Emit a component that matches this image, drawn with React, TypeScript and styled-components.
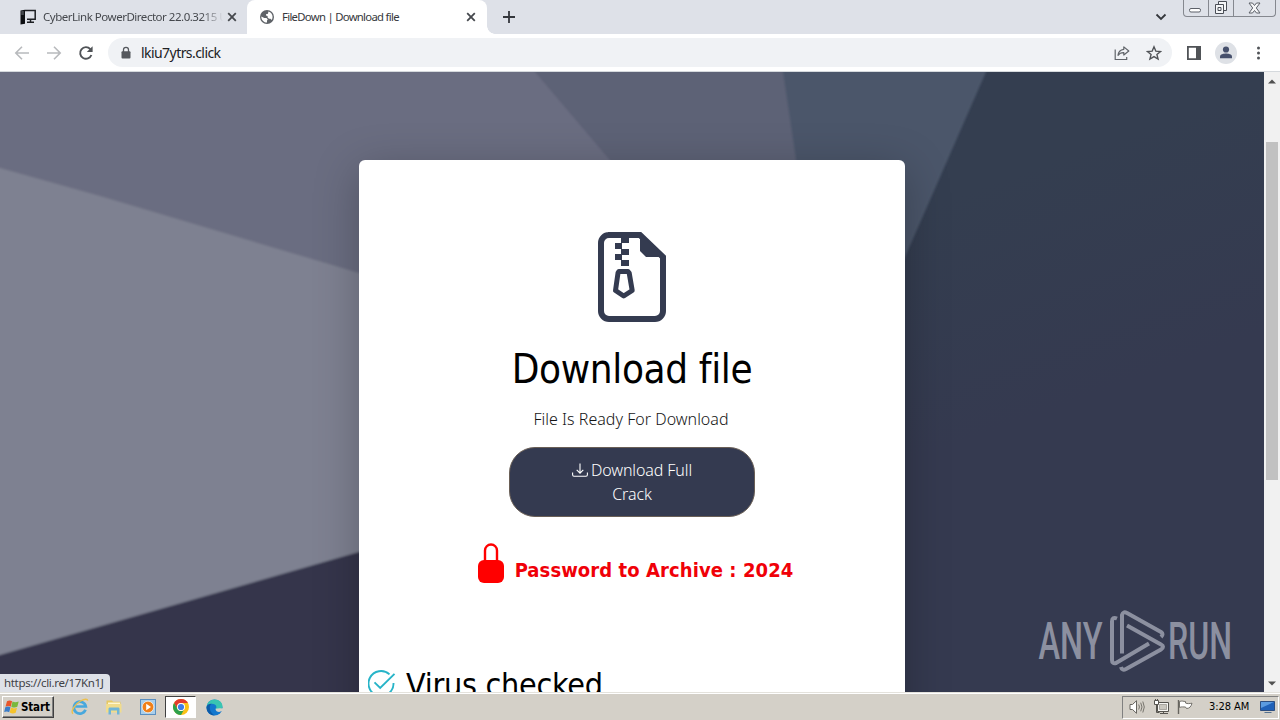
import React from "react";
import styled, { createGlobalStyle } from "styled-components";

const ui = `"Noto Sans", "Open Sans", sans-serif`;
const tahoma = `"DejaVu Sans Condensed", "DejaVu Sans", sans-serif`;

const GlobalStyle = createGlobalStyle`
  * { box-sizing: border-box; }
  body { margin: 0; overflow: hidden; background: #fff; }
  svg { display: block; flex: none; }
`;

const Desktop = styled.div`
  width: 1280px;
  height: 720px;
  display: flex;
  flex-direction: column;
  font-family: ${ui};
  overflow: hidden;
`;

const TabStrip = styled.div`
  height: 34px;
  flex: none;
  display: flex;
  background: #dee1e8;
`;

const Tab = styled.div<{ $active?: boolean; $width: number; $pad: number }>`
  width: ${(p) => p.$width}px;
  height: 34px;
  display: flex;
  align-items: center;
  padding: 0 ${(p) => (p.$active ? 11 : 10)}px 0 ${(p) => p.$pad}px;
  background: ${(p) => (p.$active ? "#fff" : "transparent")};
  border-radius: 8px 8px 0 0;
`;

const TabTitle = styled.span<{ $fade?: boolean; $size: number; $spacing: number }>`
  flex: 1;
  min-width: 0;
  margin-left: ${(p) => (p.$fade ? 7 : 8)}px;
  overflow: hidden;
  white-space: nowrap;
  font-size: ${(p) => p.$size}px;
  line-height: 16px;
  letter-spacing: ${(p) => p.$spacing}px;
  color: ${(p) => (p.$fade ? "#45484d" : "#36383c")};
  ${(p) => p.$fade && "mask-image: linear-gradient(to right, #000 86%, transparent 98%);"}
`;

const TabCorner = styled.div`
  width: 8px;
  height: 8px;
  align-self: flex-end;
  background: radial-gradient(circle at 100% 0, #dee1e8 7.5px, #fff 8px);
`;

const NewTab = styled.div`
  margin: 10px 0 0 7px;
`;

const WindowControls = styled.div`
  margin-left: auto;
  display: flex;
  gap: 16px;
`;

const TabSearch = styled.div`
  padding-top: 13px;
`;

const ControlGroup = styled.div`
  display: flex;
  width: 93px;
  height: 17px;
  margin-right: 4px;
  border: 1px solid #85888f;
  border-top: 0;
  border-radius: 0 0 4px 4px;
`;

const Control = styled.div<{ $width: number }>`
  width: ${(p) => p.$width}px;
  display: flex;
  justify-content: center;
  align-items: center;
  & + & { border-left: 1px solid #85888f; }
`;

const Toolbar = styled.div`
  height: 38px;
  flex: none;
  display: flex;
  align-items: center;
  background: #fff;
  border-bottom: 1px solid #d5d9dd;
  padding: 0 12px 0 14px;
`;

const NavButtons = styled.div`
  display: flex;
  gap: 16px;
  margin-right: 14px;
`;

const AddressBar = styled.div`
  width: 1064px;
  height: 29px;
  display: flex;
  align-items: center;
  border-radius: 15px;
  background: #f0f2f5;
  padding: 0 10px 0 12px;
`;

const Address = styled.span`
  flex: 1;
  margin-left: 9px;
  font-size: 14px;
  line-height: 20px;
  letter-spacing: -0.56px;
  color: #202124;
`;

const AddressActions = styled.div`
  display: flex;
  gap: 16px;
`;

const ProfileActions = styled.div`
  display: flex;
  align-items: center;
  margin-left: 15px;
  gap: 14px;
`;

const Viewport = styled.div`
  position: relative;
  height: 620px;
  flex: none;
  display: flex;
`;

const Page = styled.main`
  position: relative;
  width: 1264px;
  overflow: hidden;
  display: flex;
  justify-content: center;
  padding-top: 88px;
  background: #353a50;
`;

const Backdrop = styled.svg`
  position: absolute;
  inset: 0;
`;

const Card = styled.section`
  position: relative;
  width: 546px;
  height: 700px;
  flex: none;
  display: flex;
  flex-direction: column;
  align-items: center;
  padding-top: 72px;
  background: #fff;
  border-radius: 6px;
  box-shadow: 0 10px 45px rgba(0, 0, 0, 0.25);
`;

const Title = styled.h1`
  margin: 23px 0 0;
  font: 400 40px/48px ${tahoma};
  letter-spacing: -0.35px;
  color: #000;
  white-space: nowrap;
`;

const Subtitle = styled.p`
  margin: 14px 2px 0 0;
  font-size: 16px;
  line-height: 24px;
  font-weight: 300;
  letter-spacing: 0.02px;
  color: #151515;
`;

const DownloadButton = styled.button`
  width: 246px;
  height: 70px;
  margin: 16px 0 0;
  padding: 0 50px;
  border: 1px solid #6a5f56;
  border-radius: 26px;
  background: #343a50;
  color: #fff;
  font: 300 16px/24px ${ui};
  letter-spacing: -0.1px;
`;

const ButtonLine = styled.span`
  display: flex;
  justify-content: center;
  align-items: center;
  gap: 3px;
  white-space: nowrap;
`;

const PasswordRow = styled.div`
  display: flex;
  align-items: flex-start;
  gap: 11px;
  margin: 26px 0 0 7px;
`;

const Password = styled.strong`
  margin-top: 15px;
  font: 700 20px/24px ${tahoma};
  letter-spacing: 0.08px;
  color: #f00008;
  white-space: nowrap;
`;

const CheckRow = styled.div`
  align-self: flex-start;
  display: flex;
  align-items: flex-start;
  gap: 10px;
  margin: 87px 0 0 9px;
`;

const CheckTitle = styled.h2`
  margin: -3px 0 0;
  font: 400 32px/36px ${tahoma};
  letter-spacing: -0.28px;
  color: #000;
  white-space: nowrap;
`;

const Watermark = styled.svg`
  position: absolute;
  left: 1030px;
  top: 528px;
`;

const StatusBubble = styled.div`
  position: absolute;
  left: 0;
  bottom: 0;
  width: 110px;
  height: 18px;
  padding-left: 4px;
  border-radius: 0 4px 0 0;
  background: #dee1e8;
  color: #3f4146;
  font-size: 11.5px;
  line-height: 18px;
  letter-spacing: -0.33px;
  white-space: nowrap;
`;

const Scrollbar = styled.div`
  width: 16px;
  display: flex;
  flex-direction: column;
  align-items: center;
  background: #f1f1f1;
  padding: 7px 0 6px;
`;

const Thumb = styled.div`
  width: 12px;
  height: 338px;
  margin: 58px 0 auto;
  background: #c1c1c1;
`;

const Taskbar = styled.footer`
  height: 28px;
  flex: none;
  display: flex;
  align-items: center;
  background: #d4d0c8;
  border-top: 1px solid #e4e2dc;
  box-shadow: inset 0 1px 0 #fff;
  padding: 1px 1px 0 2px;
`;

const StartButton = styled.div`
  width: 52px;
  height: 22px;
  display: flex;
  align-items: center;
  gap: 1px;
  padding-left: 1px;
  border: 1px solid;
  border-color: #fff #404040 #404040 #fff;
  box-shadow: inset -1px -1px 0 #808080;
  font: 700 11.5px/18px ${tahoma};
  letter-spacing: -0.15px;
  color: #000;
`;

const QuickLaunch = styled.div`
  display: flex;
  align-items: center;
  margin-left: 9px;
`;

const LaunchItem = styled.div<{ $pressed?: boolean; $width: number }>`
  width: ${(p) => p.$width}px;
  height: 22px;
  display: flex;
  justify-content: center;
  align-items: center;
  background: ${(p) => (p.$pressed ? "#fff" : "transparent")};
  border: ${(p) => (p.$pressed ? "1px solid" : "0")};
  border-color: #404040 #fff #fff #404040;
`;

const Tray = styled.div`
  width: 157px;
  height: 23px;
  margin-left: auto;
  display: flex;
  align-items: center;
  padding-left: 6px;
  border: 1px solid;
  border-color: #808080 #fff #fff #808080;
`;

const TrayIcons = styled.div`
  display: flex;
  gap: 7px;
`;

const Clock = styled.span`
  width: 42px;
  margin: 0 9px 0 15px;
  font: 400 11px/16px ${tahoma};
  letter-spacing: -0.05px;
  color: #000;
  white-space: nowrap;
`;

const CloseIcon = () => (
  <svg width="10" height="10" viewBox="0 0 10 10">
    <path d="M1.2 1.2 8.8 8.8M8.8 1.2 1.2 8.8" stroke="#45484d" strokeWidth="1.8" />
  </svg>
);

const ComputerIcon = () => (
  <svg width="16" height="16" viewBox="0 0 16 16">
    <path d="M0.5 1.5 5 .8V14.8L.5 15.5Z" fill="#0d0f12" />
    <path d="M1.3 3h2.5M1.3 5h2.5" stroke="#9ba0a8" strokeWidth=".8" />
    <path d="M5 1.5h10.2v8.7H7" fill="none" stroke="#1d1f23" strokeWidth="1.5" />
    <path d="M10.5 10.5v2M7 13.2h7" stroke="#1d1f23" strokeWidth="1.5" />
  </svg>
);

const GlobeIcon = () => (
  <svg width="14" height="14" viewBox="0 0 14 14">
    <circle cx="7" cy="7" r="7" fill="#5f6368" />
    <path d="M1.3 6.5 4.3 8h2.2l1.3 1.4-.8 1.2v2C3.8 12.6 1.2 10 1.3 6.5Z" fill="#fff" />
    <path d="M8.4 1.5c2.5.7 4.3 2.9 4.2 5.6-.1 1.2-.4 2.2-1 3L10.5 8.7H9L7.6 7.5V6L6 5.5V4.3l2-.5Z" fill="#fff" />
  </svg>
);

const ArrowIcon = ({ forward }: { forward?: boolean }) => (
  <svg width="16" height="16" viewBox="0 0 16 16">
    <path
      d={forward ? "M1 8h13M8 1.8 14.2 8 8 14.2" : "M15 8H2M8 1.8 1.8 8 8 14.2"}
      fill="none" stroke="#b8babd" strokeWidth="1.6"
    />
  </svg>
);

const ReloadIcon = () => (
  <svg width="16" height="16" viewBox="0 0 16 16">
    <path d="M13.4 10A5.8 5.8 0 1 1 12.3 4.1L13.5 5.3" fill="none" stroke="#505357" strokeWidth="1.9" />
    <path d="M14.6 1.2V7H8.8Z" fill="#505357" />
  </svg>
);

const SmallLock = () => (
  <svg width="12" height="14" viewBox="0 0 12 14">
    <rect x="1.5" y="5.2" width="9" height="7.3" rx="1" fill="#55585d" />
    <path d="M3.5 6V3.8a2.5 2.5 0 0 1 5 0V6" fill="none" stroke="#55585d" strokeWidth="1.3" />
  </svg>
);

const ShareIcon = () => (
  <svg width="16" height="16" viewBox="0 0 16 16">
    <path d="M1.2 4.5v10h11.5v-2.5" fill="none" stroke="#606469" strokeWidth="1.2" />
    <path d="M9.8 1.9 14.8 6 9.8 10V7.6C7.2 7.5 5.4 8.3 4 10.3 4.3 6.9 6.2 4.7 9.8 4.3Z" fill="none" stroke="#606469" strokeWidth="1.2" strokeLinejoin="round" />
  </svg>
);

const StarIcon = () => (
  <svg width="16" height="16" viewBox="0 0 16 16">
    <path d="m8 1.8 1.8 4.3 4.7.4-3.6 3 1.2 4.6L8 11.6l-4.1 2.5 1.2-4.6-3.6-3 4.7-.4Z" fill="none" stroke="#505357" strokeWidth="1.35" />
  </svg>
);

const SidePanelIcon = () => (
  <svg width="14" height="14" viewBox="0 0 14 14">
    <path d="M0 0h14v14H0ZM1.8 1.8v10.4H9V1.8Z" fill="#505357" fillRule="evenodd" />
  </svg>
);

const ProfileIcon = () => (
  <svg width="22" height="22" viewBox="0 0 22 22">
    <circle cx="11" cy="11" r="11" fill="#dee1e6" />
    <circle cx="11" cy="7.5" r="3.1" fill="#46506c" />
    <path d="M5 16.3V14.5c0-2.2 3.8-3 6-3s6 .8 6 3v1.8Z" fill="#46506c" />
  </svg>
);

const MenuIcon = () => (
  <svg width="16" height="16" viewBox="0 0 16 16">
    {[3, 8, 13].map((y) => <circle key={y} cx="7.5" cy={y} r="1.5" fill="#505357" />)}
  </svg>
);

const ScrollArrow = ({ down }: { down?: boolean }) => (
  <svg width="8" height="5" viewBox="0 0 8 5">
    <path d={down ? "M0 .5h8L4 4.5Z" : "M0 4.5h8L4 .5Z"} fill="#505050" />
  </svg>
);

const ZipIcon = () => (
  <svg width="68" height="90" viewBox="0 0 68 90">
    <path d="M10 3H42L65 25V79a8 8 0 0 1-8 8H11a8 8 0 0 1-8-8V11A8 8 0 0 1 11 3" fill="none" stroke="#343b50" strokeWidth="6" />
    <path d="M42 2 67 25H48L42 19Z" fill="#343b50" />
    <path d="M23 5h8v6h-8ZM17 11h7v6h-7ZM23 17h8v6h-8ZM17 22h7v6h-7ZM23 28h8v6h-8Z" fill="#343b50" />
    <path d="M21 39.5h9l1.2 1.5 3 17.5L25.7 64 17.5 58.5 20 41Z" fill="none" stroke="#343b50" strokeWidth="5" strokeLinejoin="round" />
  </svg>
);

const DownloadIcon = () => (
  <svg width="16" height="16" viewBox="0 0 16 16">
    <path d="M.6 10.5v2.3c0 .9.5 1.4 1.4 1.4h12c.9 0 1.4-.5 1.4-1.4v-2.3M8 1.5v9.5M4.7 7.9 8 11.2l3.3-3.3" fill="none" stroke="#fff" strokeWidth="1.1" />
  </svg>
);

const RedLock = () => (
  <svg width="26" height="40" viewBox="0 0 26 40">
    <path d="M7 19V7.5a6 6 0 0 1 12 0V19" fill="none" stroke="#f00" strokeWidth="2.4" />
    <rect y="17" width="26" height="23" rx="6" fill="#f00" />
  </svg>
);

const CheckIcon = () => (
  <svg width="28" height="29" viewBox="0 0 28 29">
    <path d="M21.5 4.4A12.5 12.5 0 1 0 25.5 13M6.500 12.300l5.700 5.700L26.500 3.800" fill="none" stroke="#27b4c8" strokeWidth="1.900" />
  </svg>
);

const StartFlag = () => (
  <svg width="16" height="16" viewBox="0 0 15 16">
    <path d="M2.5 2.3C4.5 1 6 1.3 7.6 2.3L6.2 7.7C4.6 6.7 3 6.7 1 7.7Z" fill="#e8562a" />
    <path d="M8 2.5c2 1.1 3.7 1 6.2 0l-1.4 5.3c-2 1-3.8 1-6-.1Z" fill="#79b83c" />
    <path d="M.8 8.2c2-1 3.5-1 5.2.1l-1.3 4.9c-1.7-1-3.3-1-5-.1Z" fill="#3a7cc8" />
    <path d="M6.5 8.6c2 1.1 3.7 1 6 .1l-1.3 5c-2 1-3.7 1-6-.1Z" fill="#f5c32c" />
  </svg>
);

const ExplorerIcon = () => (
  <svg width="18" height="18" viewBox="0 0 18 18">
    <path d="M14.5 11.8a6 6 0 1 1 .3-3.3H4.5" fill="none" stroke="#48a8dd" strokeWidth="2.7" />
    <path d="M2 15.8C-.8 13.4 4 6 9.5 3c4-2.2 7-2.5 7.2-.2" fill="none" stroke="#edc04d" strokeWidth="1.4" />
  </svg>
);

const FolderIcon = () => (
  <svg width="18" height="18" viewBox="0 0 18 18">
    <path d="M1.5 4V2.5H7l1 1.3h7.5V8h-14Z" fill="#e6c862" />
    <path d="M3 4.5h12V8H3Z" fill="#fff7d0" />
    <path d="M1 6h15.5v8.5H1Z" fill="#f1dc8c" />
    <path d="M3.500 16.500V11c0-1 .6-1.500 1.500-1.500h8c1 0 1.500.5 1.500 1.500v5.500h-2.500v-4H6v4Z" fill="#70b5d8" />
  </svg>
);

const MediaIcon = () => (
  <svg width="16" height="16" viewBox="0 0 16 16">
    <rect x=".5" y=".5" width="15" height="15" fill="#a9cfeb" stroke="#5a8fc0" />
    <circle cx="8" cy="8" r="5.8" fill="#f08019" stroke="#fff" strokeWidth=".6" />
    <path d="M6.2 4.7 11 8l-4.8 3.3Z" fill="#fff" />
  </svg>
);

const ChromeIcon = () => (
  <svg width="16" height="16" viewBox="0 0 16 16">
    <circle cx="8" cy="8" r="8" fill="#fbc116" />
    <path d="M1.07 4A8 8 0 0 1 14.93 4H8A4 4 0 0 0 4.54 10Z" fill="#e33b2e" />
    <path d="M1.07 4A8 8 0 0 0 8 16L11.46 10A4 4 0 0 1 4.54 10Z" fill="#2da14c" />
    <circle cx="8" cy="8" r="4" fill="#fff" />
    <circle cx="8" cy="8" r="3.1" fill="#3e7de8" />
  </svg>
);

const EdgeIcon = () => (
  <svg width="17" height="17" viewBox="0 0 17 17">
    <circle cx="8.5" cy="8.5" r="8" fill="#1378ce" />
    <path d="M.6 8C1 3.5 4.3.5 8.6.5c4.5 0 8 3 7.9 6.8 0 2.4-1.8 4-4.3 4-1.6 0-2.5-.6-2.5-1.3 0-.6.7-.9.7-2C10.4 6 8 4.8 5.700 4.800 3 4.800 1.200 6.200.6 8Z" fill="#39c5b2" />
    <path d="M.5 8c.7-2.200 2.600-3.300 5-3.200C4 6 3.400 8 4 10.500c.5 2.300 2.300 4.500 4.600 5.900C4 16.500.3 13 .5 8Z" fill="#0c5ba8" />
    <path d="M9.600 9.800c-.2 3 3.600 3.900 6.500 2.300l1.200-2.600-3.500-.2Z" fill="#d4d0c8" />
  </svg>
);

const SpeakerIcon = () => (
  <svg width="17" height="16" viewBox="0 0 17 16">
    <path d="M1 5.5h2.5L7.5 1.7v12.6L3.5 10.5H1Z" fill="#fff" stroke="#66645f" />
    <path d="M9.7 5.5q1.5 2.5 0 5M11.7 3.7q2.6 4.3 0 8.6M13.8 2.5q3 5.5 0 11" fill="none" stroke="#77746d" />
  </svg>
);

const NetworkIcon = () => (
  <svg width="17" height="16" viewBox="0 0 17 16">
    <path d="M4.5 3.5h11v9h-11Z" fill="#f7f6f3" stroke="#56544f" />
    <path d="M6.5 5.5h7v5h-7Z" fill="#cac7bf" stroke="#85827b" strokeWidth=".6" />
    <path d="M7 14.5h8M10.5 12.5v2" stroke="#56544f" />
    <path d="M1.5 1.5h4v4h-4Z" fill="#fff" stroke="#56544f" />
    <path d="M3.5 5.5v8h3" fill="none" stroke="#56544f" />
    <path d="M2.5 0v2M4.5 0v2" stroke="#56544f" />
  </svg>
);

const FlagIcon = () => (
  <svg width="17" height="16" viewBox="0 0 17 16">
    <path d="M1.5 1v14" stroke="#66645f" strokeWidth="1.4" />
    <path d="M2.5 2.5c2.5-1 4 0 6 0V4c2 1 4 .6 6.5.2-.8 3.3-2.5 5.3-5.5 5.3L8.5 8c-2 0-4-.5-6 .5Z" fill="#fff" stroke="#66645f" strokeWidth=".9" />
  </svg>
);

const DesktopIcon = () => (
  <svg width="16" height="14" viewBox="0 0 16 14">
    <path d="M.5 1.5h14v9H.5Z" fill="#2061b8" stroke="#2d4e80" />
    <path d="M1 2h13L1 8Z" fill="#5b9be0" />
    <path d="M4.5 12.5h7" stroke="#55718f" />
  </svg>
);

const Scenery = () => (
  <Backdrop width="1264" height="620" viewBox="0 72 1264 620">
    <defs>
      <linearGradient id="dusk" gradientUnits="userSpaceOnUse" x1="1000" y1="180" x2="1080" y2="400">
        <stop offset="0" stopColor="#343e50" />
        <stop offset="1" stopColor="#353a50" />
      </linearGradient>
      <filter id="soften" x="-5%" y="-5%" width="110%" height="110%">
        <feGaussianBlur stdDeviation="0.9" />
      </filter>
    </defs>
    <rect y="72" width="1264" height="620" fill="url(#dusk)" />
    <g filter="url(#soften)">
      <path d="M-20 720V480H500V720Z" fill="#34354c" />
      <path d="M500 50H995.5L986 72 895 280 810 240H500Z" fill="#4b566a" />
      <path d="M500 50H780.5L783 72 805 220H500Z" fill="#5d6276" />
      <path d="M-20 50H516L535 72 720 290V300H-20Z" fill="#6b6d81" />
      <path d="M-20 162.500 0 168 100 196 359 273 400 285V540L359 552 0 655-20 661Z" fill="#7e8191" />
    </g>
  </Backdrop>
);

const Logo = () => (
  <Watermark width="214" height="84" viewBox="1030 600 214 84">
    <g fill="#8c90a0" fontFamily="Roboto, sans-serif" fontSize="51" fontWeight="500">
      <text x="1038.5" y="659.3" textLength="64" lengthAdjust="spacingAndGlyphs">ANY</text>
      <text x="1168" y="659.3" textLength="64" lengthAdjust="spacingAndGlyphs">RUN</text>
    </g>
    <g fill="none" stroke="#8c90a0" strokeWidth="4" strokeLinejoin="round">
      <path d="M1117 618.5q-5-2-5 3V660q0 4 4 3L1149 643.5" />
      <path d="M1122 653.5V615q1-4 5-2L1161 632q3 2 0 5" />
      <path d="M1127 625.5 1161 644.5q4 2 0 5L1126 669q-4 2-5-2" />
    </g>
  </Watermark>
);

export default function App() {
  return (
    <Desktop>
      <GlobalStyle />
      <TabStrip>
        <Tab $width={247} $pad={20}>
          <ComputerIcon />
          <TabTitle $fade $size={11.5} $spacing={-0.48}>CyberLink PowerDirector 22.0.3215 U</TabTitle>
          <CloseIcon />
        </Tab>
        <Tab $active $width={240} $pad={13}>
          <GlobeIcon />
          <TabTitle $size={11.3} $spacing={-0.7}>FileDown | Download file</TabTitle>
          <CloseIcon />
        </Tab>
        <TabCorner />
        <NewTab>
          <svg width="14" height="14" viewBox="0 0 14 14">
            <path d="M7 1v12M1 7h12" stroke="#34373c" strokeWidth="1.8" />
          </svg>
        </NewTab>
        <WindowControls>
          <TabSearch>
            <svg width="12" height="8" viewBox="0 0 12 8">
              <path d="m1.5 1.5 4.5 4.5 4.5-4.5" fill="none" stroke="#34373c" strokeWidth="1.8" />
            </svg>
          </TabSearch>
          <ControlGroup>
            <Control $width={24}>
              <svg width="13" height="14" viewBox="0 0 13 14">
                <rect x=".5" y="7.5" width="11" height="3.5" rx="1.5" fill="#fff" stroke="#5c6068" />
              </svg>
            </Control>
            <Control $width={26}>
              <svg width="14" height="14" viewBox="0 0 14 14">
                <path d="M4.5.5h8v9h-8Z" fill="#f5f6f8" stroke="#4a4e56" />
                <path d="M1.5 3.5h8v9h-8ZM4 6.5h3v3H4Z" fill="#f5f6f8" stroke="#4a4e56" />
              </svg>
            </Control>
            <Control $width={42}>
              <svg width="13" height="12" viewBox="0 0 13 12">
                <path d="M1 1h3.5l2 2.5L8.5 1H12L8.3 6l3.7 5H8.5l-2-2.5-2 2.5H1l3.7-5Z" fill="#f5f6f8" stroke="#5c6068" />
              </svg>
            </Control>
          </ControlGroup>
        </WindowControls>
      </TabStrip>
      <Toolbar>
        <NavButtons>
          <ArrowIcon />
          <ArrowIcon forward />
          <ReloadIcon />
        </NavButtons>
        <AddressBar>
          <SmallLock />
          <Address>lkiu7ytrs.click</Address>
          <AddressActions>
            <ShareIcon />
            <StarIcon />
          </AddressActions>
        </AddressBar>
        <ProfileActions>
          <SidePanelIcon />
          <ProfileIcon />
          <MenuIcon />
        </ProfileActions>
      </Toolbar>
      <Viewport>
        <Page>
          <Scenery />
          <Card>
            <ZipIcon />
            <Title>Download file</Title>
            <Subtitle>File Is Ready For Download</Subtitle>
            <DownloadButton>
              <ButtonLine><DownloadIcon />Download Full</ButtonLine>
              <ButtonLine>Crack</ButtonLine>
            </DownloadButton>
            <PasswordRow>
              <RedLock />
              <Password>Password to Archive : 2024</Password>
            </PasswordRow>
            <CheckRow>
              <CheckIcon />
              <CheckTitle>Virus checked</CheckTitle>
            </CheckRow>
          </Card>
          <Logo />
        </Page>
        <Scrollbar>
          <ScrollArrow />
          <Thumb />
          <ScrollArrow down />
        </Scrollbar>
        <StatusBubble>https://cli.re/17Kn1J</StatusBubble>
      </Viewport>
      <Taskbar>
        <StartButton><StartFlag />Start</StartButton>
        <QuickLaunch>
          <LaunchItem $width={34}><ExplorerIcon /></LaunchItem>
          <LaunchItem $width={34}><FolderIcon /></LaunchItem>
          <LaunchItem $width={34}><MediaIcon /></LaunchItem>
          <LaunchItem $width={31} $pressed><ChromeIcon /></LaunchItem>
          <LaunchItem $width={36}><EdgeIcon /></LaunchItem>
        </QuickLaunch>
        <Tray>
          <TrayIcons>
            <SpeakerIcon />
            <NetworkIcon />
            <FlagIcon />
          </TrayIcons>
          <Clock>3:28 AM</Clock>
          <DesktopIcon />
        </Tray>
      </Taskbar>
    </Desktop>
  );
}
